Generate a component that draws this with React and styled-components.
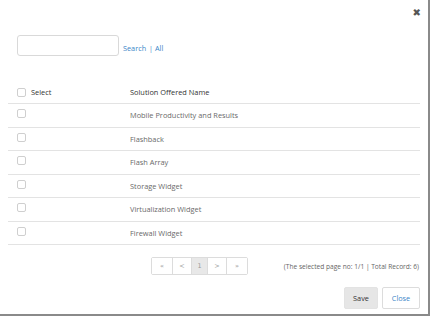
import React, { useState } from 'react';
import styled, { createGlobalStyle } from 'styled-components';

const GlobalStyle = createGlobalStyle`
  html, body {
    margin: 0;
    padding: 0;
    background: #ffffff;
  }
  body {
    font-family: 'Open Sans', 'DejaVu Sans', sans-serif;
  }
`;

const Modal = styled.div`
  box-sizing: border-box;
  width: 430px;
  height: 316px;
  background: #ffffff;
  border-right: 2px solid #8a8a8a;
  border-bottom: 2px solid #8a8a8a;
  display: flex;
  flex-direction: column;
  padding: 0 8px 0 8px;
`;

const Header = styled.div`
  display: flex;
  justify-content: flex-end;
  height: 34px;
  padding-top: 7px;
  box-sizing: border-box;
`;

const CloseX = styled.button`
  border: none;
  background: none;
  padding: 0;
  margin-right: -1px;
  font-family: 'DejaVu Sans', sans-serif;
  font-size: 10px;
  font-weight: bold;
  color: #555;
  line-height: 12px;
  height: 12px;
  cursor: pointer;
`;

const SearchBar = styled.div`
  display: flex;
  align-items: center;
  gap: 4px;
  padding-left: 9px;
`;

const SearchInput = styled.input`
  box-sizing: border-box;
  width: 102px;
  height: 21px;
  border: 1px solid #d9d9d9;
  border-radius: 3px;
  outline: none;
`;

const LinkText = styled.a`
  font-size: 7.3px;
  color: #3a86c8;
  text-decoration: none;
`;

const Sep = styled.span`
  font-size: 7px;
  color: #3a86c8;
  margin: 0 2px 0 3px;
`;

const Table = styled.div`
  margin-top: 25px;
  display: flex;
  flex-direction: column;
`;

const Row = styled.div`
  display: grid;
  grid-template-columns: 122px 1fr;
  align-items: center;
  height: ${(p) => (p.head ? 23 : 23.5)}px;
  border-bottom: 1px solid #e3e3e3;
  box-sizing: border-box;
  font-size: 7.4px;
  color: ${(p) => (p.head ? '#333' : '#6a6a6a')};
`;

const SelectCell = styled.div`
  display: flex;
  align-items: center;
  gap: 5px;
  padding-left: 9px;
  margin-top: ${(p) => (p.head ? 0 : -3)}px;
`;

const Box = styled.span`
  box-sizing: border-box;
  display: inline-block;
  width: 9px;
  height: 9px;
  border: 1px solid #cfcfcf;
  border-radius: 2px;
  background: #fff;
`;

const Footer = styled.div`
  display: flex;
  align-items: center;
  margin-top: 12px;
  padding-left: 143px;
`;

const Pager = styled.div`
  display: flex;
  height: 18px;
  border: 1px solid #dcdcdc;
  border-radius: 2px;
  box-sizing: border-box;
`;

const PageCell = styled.span`
  width: ${(p) => p.w}px;
  display: flex;
  align-items: center;
  justify-content: center;
  font-family: 'DejaVu Sans', sans-serif;
  font-size: 6.5px;
  color: #999;
  background: ${(p) => (p.active ? '#e8e8e8' : '#fff')};
  border-left: ${(p) => (p.first ? 'none' : '1px solid #dcdcdc')};
`;

const Info = styled.span`
  margin-left: auto;
  margin-right: 1px;
  font-size: 6.6px;
  color: #666;
`;

const Actions = styled.div`
  display: flex;
  justify-content: flex-end;
  gap: 4px;
  margin-top: 12px;
`;

const Btn = styled.button`
  box-sizing: border-box;
  height: 22px;
  width: ${(p) => p.w}px;
  font-family: inherit;
  font-size: 7.3px;
  border-radius: 2px;
  padding: 0;
  border: 1px solid ${(p) => (p.primary ? '#e3e3e3' : '#dcdcdc')};
  background: ${(p) => (p.primary ? '#e6e6e6' : '#fff')};
  color: ${(p) => (p.primary ? '#333' : '#3a86c8')};
`;

const solutions = [
  'Mobile Productivity and Results',
  'Flashback',
  'Flash Array',
  'Storage Widget',
  'Virtualization Widget',
  'Firewall Widget'
];

export default function App() {
  const [query, setQuery] = useState('');
  return (
    <>
      <GlobalStyle />
      <Modal>
        <Header>
          <CloseX>✖</CloseX>
        </Header>
        <SearchBar>
          <SearchInput value={query} onChange={(e) => setQuery(e.target.value)} />
          <div>
            <LinkText href="#">Search</LinkText>
            <Sep>|</Sep>
            <LinkText href="#">All</LinkText>
          </div>
        </SearchBar>
        <Table>
          <Row head>
            <SelectCell head>
              <Box />
              <span>Select</span>
            </SelectCell>
            <span>Solution Offered Name</span>
          </Row>
          {solutions.map((name) => (
            <Row key={name}>
              <SelectCell>
                <Box />
              </SelectCell>
              <span>{name}</span>
            </Row>
          ))}
        </Table>
        <Footer>
          <Pager>
            <PageCell w={20} first>«</PageCell>
            <PageCell w={18}>&lt;</PageCell>
            <PageCell w={15} active>1</PageCell>
            <PageCell w={18}>&gt;</PageCell>
            <PageCell w={20}>»</PageCell>
          </Pager>
          <Info>(The selected page no: 1/1 | Total Record: 6)</Info>
        </Footer>
        <Actions>
          <Btn primary w={34}>Save</Btn>
          <Btn w={38}>Close</Btn>
        </Actions>
      </Modal>
    </>
  );
}
